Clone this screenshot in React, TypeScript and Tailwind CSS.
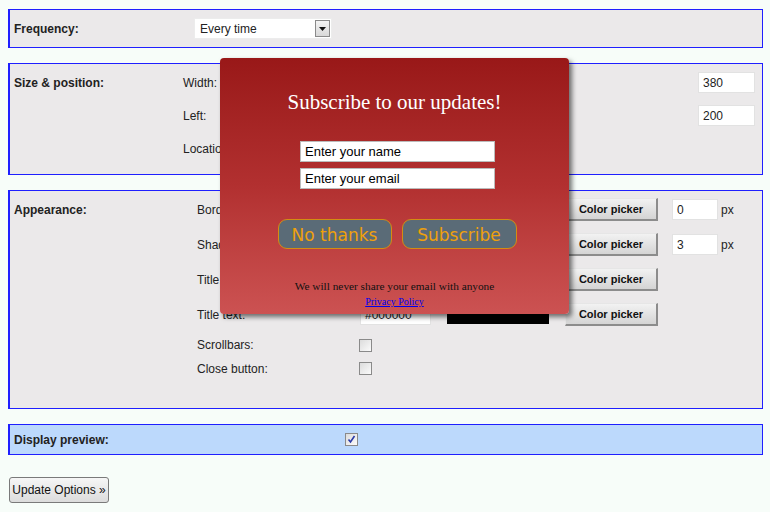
import React from 'react';

const font = { fontFamily: '"Liberation Sans", Arial, sans-serif' };

const Panel: React.FC<{ className?: string; children: React.ReactNode }> = ({ className = '', children }) => (
  <div className={`border border-l-2 border-[#1f1fff] ${className}`}>{children}</div>
);

const TextBox: React.FC<{ value: string; className?: string }> = ({ value, className = '' }) => (
  <div className={`bg-white border border-[#e2e2e2] flex items-center pl-[4px] text-[12px] text-[#222] ${className}`}>
    {value}
  </div>
);

const ColorButton: React.FC = () => (
  <div className="w-[93px] h-[23px] flex items-center justify-center text-[11px] font-bold text-[#111] bg-gradient-to-b from-[#f2f2f2] to-[#d4d4d4] border border-[#e6e6e6] border-r-2 border-b-2 border-r-[#8c8c8c] border-b-[#8c8c8c]">
    Color picker
  </div>
);

const Checkbox: React.FC<{ checked?: boolean }> = ({ checked }) => (
  <div className="w-[13px] h-[13px] border border-[#8a8a8a] bg-gradient-to-br from-[#dcdcdc] to-[#fbfbfb] flex items-center justify-center">
    {checked && (
      <svg width="9" height="9" viewBox="0 0 9 9">
        <path d="M1.5 4.5 L3.5 7 L7.5 1" fill="none" stroke="#2a3aa8" strokeWidth="1.6" />
      </svg>
    )}
  </div>
);

const AppearanceRow: React.FC<{ label: string; color: string; px?: string }> = ({ label, color, px }) => (
  <div className="h-[35px] flex items-center">
    <div className="w-[163px]">{label}</div>
    <div className="w-[87px]">
      <TextBox value={color} className="w-[71px] h-[20px]" />
    </div>
    <div className="w-[118px]">
      <div className="w-[102px] h-[19px]" style={{ background: color }} />
    </div>
    <div className="w-[107px]">
      <ColorButton />
    </div>
    {px !== undefined && (
      <div className="flex items-center gap-[3px]">
        <TextBox value={px} className="w-[46px] h-[21px]" />
        <span>px</span>
      </div>
    )}
  </div>
);

const Popup: React.FC = () => (
  <div className="absolute left-[220px] top-[58px] w-[349px] h-[256px] rounded-[4px] bg-gradient-to-b from-[#991818] via-[#b23030] to-[#cc5252] shadow-[3px_3px_5px_rgba(0,0,0,0.55)] flex flex-col items-center">
    <div className="mt-[31px] text-[21px] leading-[26px] text-white" style={{ fontFamily: '"Liberation Serif", "Times New Roman", serif' }}>
      Subscribe to our updates!
    </div>
    <div className="mt-[26px] ml-[6px] flex flex-col gap-[6px]">
      <div className="w-[195px] h-[21px] bg-white border border-[#bbb] flex items-center pl-[4px] text-[13px] text-black">Enter your name</div>
      <div className="w-[195px] h-[21px] bg-white border border-[#bbb] flex items-center pl-[4px] text-[13px] text-black">Enter your email</div>
    </div>
    <div className="mt-[30px] ml-[5px] flex gap-[10px]" style={{ fontFamily: '"DejaVu Sans", Verdana, sans-serif' }}>
      <div className="w-[114px] h-[30px] pt-[3px] rounded-[9px] bg-[#5a6b77] border border-[#d38d12] text-[#eea00c] text-[17px] flex items-center justify-center">No thanks</div>
      <div className="w-[115px] h-[30px] pt-[3px] rounded-[9px] bg-[#5a6b77] border border-[#d38d12] text-[#eea00c] text-[17px] flex items-center justify-center">Subscribe</div>
    </div>
    <div className="mt-[30px] flex flex-col items-center" style={{ fontFamily: '"Liberation Serif", "Times New Roman", serif' }}>
      <div className="text-[11.3px] leading-[15px] text-[#111]">We will never share your email with anyone</div>
      <a className="text-[10px] leading-[15px] text-[#0000ee] underline">Privacy Policy</a>
    </div>
  </div>
);

export default function App() {
  return (
    <div className="relative w-[770px] h-[512px] bg-[#f7fdf9] text-[12px] text-[#222] overflow-hidden" style={font}>
      <div className="pt-[9px] pl-[8px] w-[763px] flex flex-col gap-[15px]">
        <Panel className="bg-[#ebe9ea] h-[39px] flex items-center pl-[4px]">
          <div className="w-[180px] font-bold">Frequency:</div>
          <div className="w-[138px] h-[21px] bg-white border border-[#ececec] flex items-center pl-[5px] relative">
            Every time
            <div className="absolute right-[1px] top-[1px] w-[15px] h-[17px] border border-[#8a8a8a] bg-gradient-to-b from-[#f4f4f4] to-[#d8d8d8] flex items-center justify-center">
              <svg width="7" height="4" viewBox="0 0 7 4"><path d="M0 0 H7 L3.5 4 Z" fill="#111" /></svg>
            </div>
          </div>
        </Panel>

        <Panel className="bg-[#ebe9ea] h-[112px] flex pl-[4px] pr-[7px] pt-[2px]">
          <div className="w-[169px] h-[33px] flex items-center font-bold">Size &amp; position:</div>
          <div className="flex-1 flex flex-col">
            <div className="h-[33px] flex items-center justify-between">
              <span>Width:</span>
              <TextBox value="380" className="w-[57px] h-[21px]" />
            </div>
            <div className="h-[33px] flex items-center justify-between">
              <span>Left:</span>
              <TextBox value="200" className="w-[57px] h-[21px]" />
            </div>
            <div className="h-[33px] flex items-center">
              <span>Location:</span>
            </div>
          </div>
        </Panel>

        <Panel className="bg-[#ebe9ea] h-[219px] flex pl-[4px] pt-[1px]">
          <div className="w-[183px] h-[35px] flex items-center font-bold">Appearance:</div>
          <div className="flex flex-col">
            <AppearanceRow label="Border:" color="#9b1a1b" px="0" />
            <AppearanceRow label="Shadow:" color="#555555" px="3" />
            <AppearanceRow label="Title:" color="#ffffff" />
            <AppearanceRow label="Title text:" color="#000000" />
            <div className="h-[26px] flex items-center">
              <div className="w-[162px]">Scrollbars:</div>
              <Checkbox />
            </div>
            <div className="h-[21px] flex items-center">
              <div className="w-[162px]">Close button:</div>
              <Checkbox />
            </div>
          </div>
        </Panel>

        <Panel className="bg-[#bcd9fc] h-[31px] flex items-center pl-[4px]">
          <div className="w-[331px] font-bold">Display preview:</div>
          <Checkbox checked />
        </Panel>
      </div>

      <div className="mt-[22px] ml-[9px] w-[100px] h-[26px] rounded-[3px] border border-[#7a7a7a] bg-gradient-to-b from-[#f6f6f6] to-[#dcdcdc] flex items-center justify-center text-[12px] text-[#111]">
        Update Options »
      </div>

      <Popup />
    </div>
  );
}
